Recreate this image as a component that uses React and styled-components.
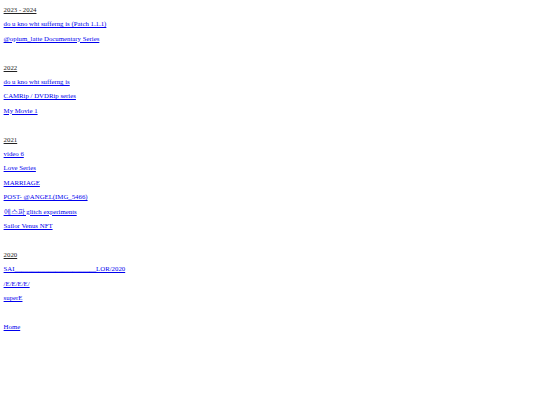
import React from 'react';
import styled, { createGlobalStyle } from 'styled-components';

const GlobalStyle = createGlobalStyle`
  html, body {
    margin: 0;
    padding: 0;
    background: #ffffff;
  }
  body {
    font-family: "Liberation Serif", "Times New Roman", serif;
  }
`;

const Page = styled.div`
  padding: 3px 0 0 3.6px;
  font-size: 6.8px;
  line-height: 14.4px;
`;

const Section = styled.div`
  display: flex;
  flex-direction: column;
  align-items: flex-start;
  margin-bottom: 14.4px;
`;

const Year = styled.span`
  color: #222222;
  text-decoration: underline;
`;

const Item = styled.a`
  color: #0000ee;
  text-decoration: underline;
`;

const groups = [
  {
    year: '2023 - 2024',
    items: ['do u kno wht sufferng is (Patch 1.1.1)', '@opium_latte Documentary Series'],
  },
  {
    year: '2022',
    items: ['do u kno wht sufferng is', 'CAMRip / DVDRip series', 'My Movie 1'],
  },
  {
    year: '2021',
    items: [
      'video 6',
      'Love Series',
      'MARRIAGE',
      'POST- @ANGEL(IMG_5466)',
      '에스파 glitch experiments',
      'Sailor Venus NFT',
    ],
  },
  {
    year: '2020',
    items: ['SAI________________________LOR/2020', '/E/E/E/E/', 'superE'],
  },
];

export default function App() {
  return (
    <>
      <GlobalStyle />
      <Page>
        {groups.map((g) => (
          <Section key={g.year}>
            <Year>{g.year}</Year>
            {g.items.map((it) => (
              <Item key={it} href="#">
                {it}
              </Item>
            ))}
          </Section>
        ))}
        <Section>
          <Item href="#">Home</Item>
        </Section>
      </Page>
    </>
  );
}
